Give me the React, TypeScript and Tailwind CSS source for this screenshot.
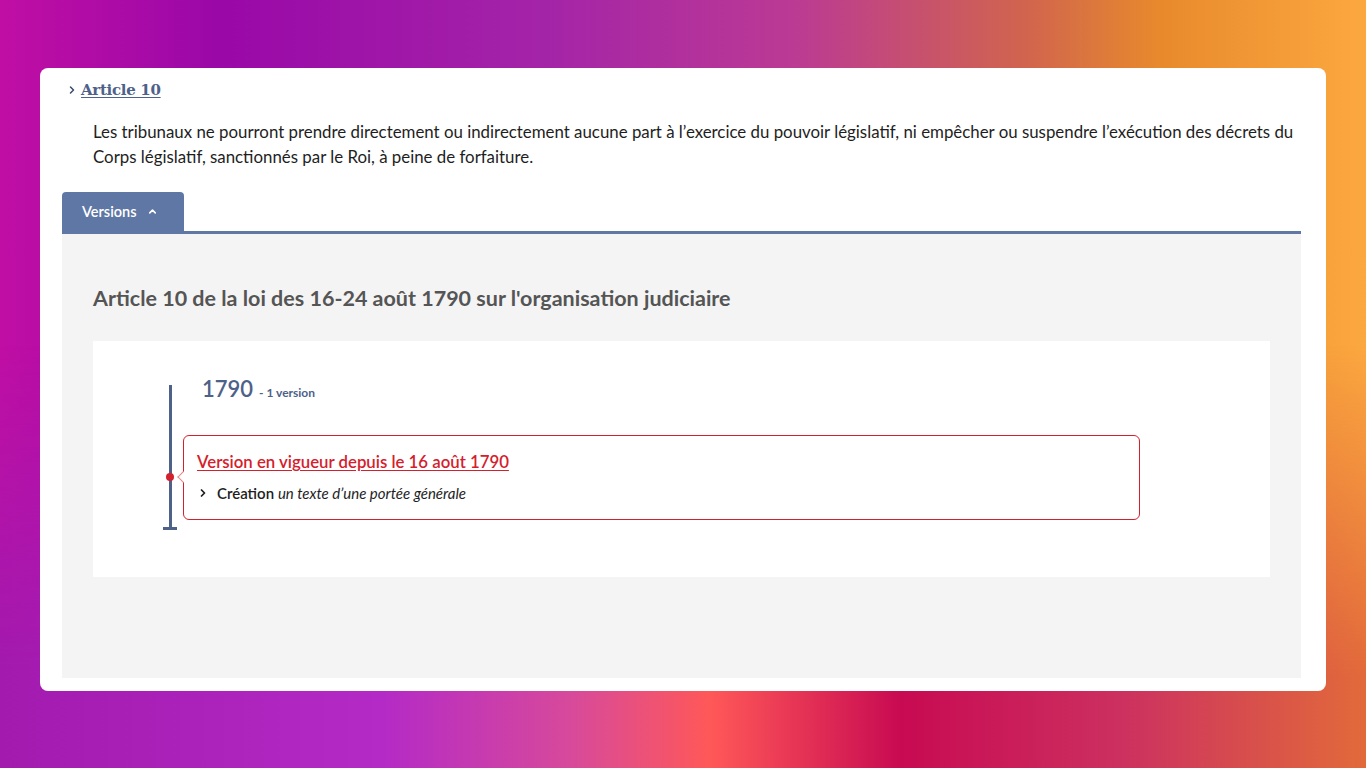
import { ChevronRight, ChevronUp } from 'lucide-react';

export default function App() {
  return (
    <div className="relative w-full h-[768px] overflow-hidden bg-[linear-gradient(90deg,#c00ea4_0%,#9a08a8_16%,#a424a8_40%,#bb3a94_58%,#d0644e_75%,#e88a2c_85%,#fca840_100%)] font-['Lato','Noto_Sans',sans-serif]">
      <div className="absolute inset-0 bg-[linear-gradient(90deg,#a21aae_0%,#b42ac6_28%,#d84a9a_42%,#ff5858_52%,#c80a52_66%,#cc3060_82%,#e26a3a_100%)] [mask-image:linear-gradient(180deg,transparent_45%,black_88%)]" />
      <div className="relative px-10 pt-[68px]">
        <div className="bg-white rounded-lg h-[623px] pl-[22px] pr-[25px] pt-[12px] pb-[13px] flex flex-col">
          <div className="flex items-center gap-[3px] pl-[4px] h-[20px]">
            <ChevronRight className="w-[12px] h-[12px] text-[#3a4a6a]" strokeWidth={3} />
            <a className="font-['DejaVu_Serif',serif] font-bold text-[15px] text-[#4d6189] underline underline-offset-2 tracking-[-0.3px]">Article 10</a>
          </div>
          <p className="pl-[31px] mt-[19px] text-[16.85px] leading-[25px] text-[#1e1e1e]">
            Les tribunaux ne pourront prendre directement ou indirectement aucune part à l’exercice du pouvoir législatif, ni empêcher ou suspendre l’exécution des décrets du Corps législatif, sanctionnés par le Roi, à peine de forfaiture.
          </p>
          <div className="mt-[23px] flex border-b-[3px] border-[#5f77a5]">
            <div className="w-[122px] h-[39px] bg-[#5f77a5] rounded-t-[4px] flex items-center pl-[20px] gap-[10px] text-white text-[14.5px] font-semibold">
              Versions
              <ChevronUp className="w-[11px] h-[11px]" strokeWidth={3.5} />
            </div>
          </div>
          <div className="flex-1 bg-[#f4f4f4] pt-[51px] px-[31px]">
            <h2 className="text-[21.5px] font-bold text-[#555555] leading-[26px]">
              Article 10 de la loi des 16-24 août 1790 sur l'organisation judiciaire
            </h2>
            <div className="mt-[30px] bg-white h-[236px] pt-[44px] pl-[67px]">
              <div className="relative flex">
                <div className="relative w-[20px] flex flex-col items-center">
                  <div className="w-[3px] h-[145px] bg-[#4d6189]" />
                  <div className="w-[14px] h-[3px] bg-[#4d6189] -mt-[3px]" />
                  <div className="absolute left-[6px] top-[88px] w-[8px] h-[8px] rounded-full bg-[#d4202c]" />
                </div>
                <div className="flex flex-col">
                  <div className="flex items-baseline gap-[6px] ml-[22px] -mt-[13px]">
                    <span className="text-[22px] font-semibold text-[#4d6189]">1790</span>
                    <span className="text-[12px] font-bold text-[#4d6189]">- 1 version</span>
                  </div>
                  <div className="relative mt-[30px] ml-[3px] w-[957px] h-[85px] border border-[#d4202c] rounded-[6px] px-[13px] pt-[13px]">
                    <div className="absolute -left-[5px] top-[37px] w-[8px] h-[8px] bg-white border-l border-b border-[#e4878b] rotate-45" />
                    <a className="text-[16.8px] font-semibold text-[#d4202c] underline underline-offset-2">Version en vigueur depuis le 16 août 1790</a>
                    <div className="mt-[8px] flex items-center gap-[8px] text-[15px] text-[#1e1e1e]">
                      <ChevronRight className="w-[12px] h-[12px]" strokeWidth={3.5} />
                      <span>
                        <b className="font-semibold">Création</b> <i>un texte d’une portée générale</i>
                      </span>
                    </div>
                  </div>
                </div>
              </div>
            </div>
          </div>
        </div>
      </div>
    </div>
  );
}
